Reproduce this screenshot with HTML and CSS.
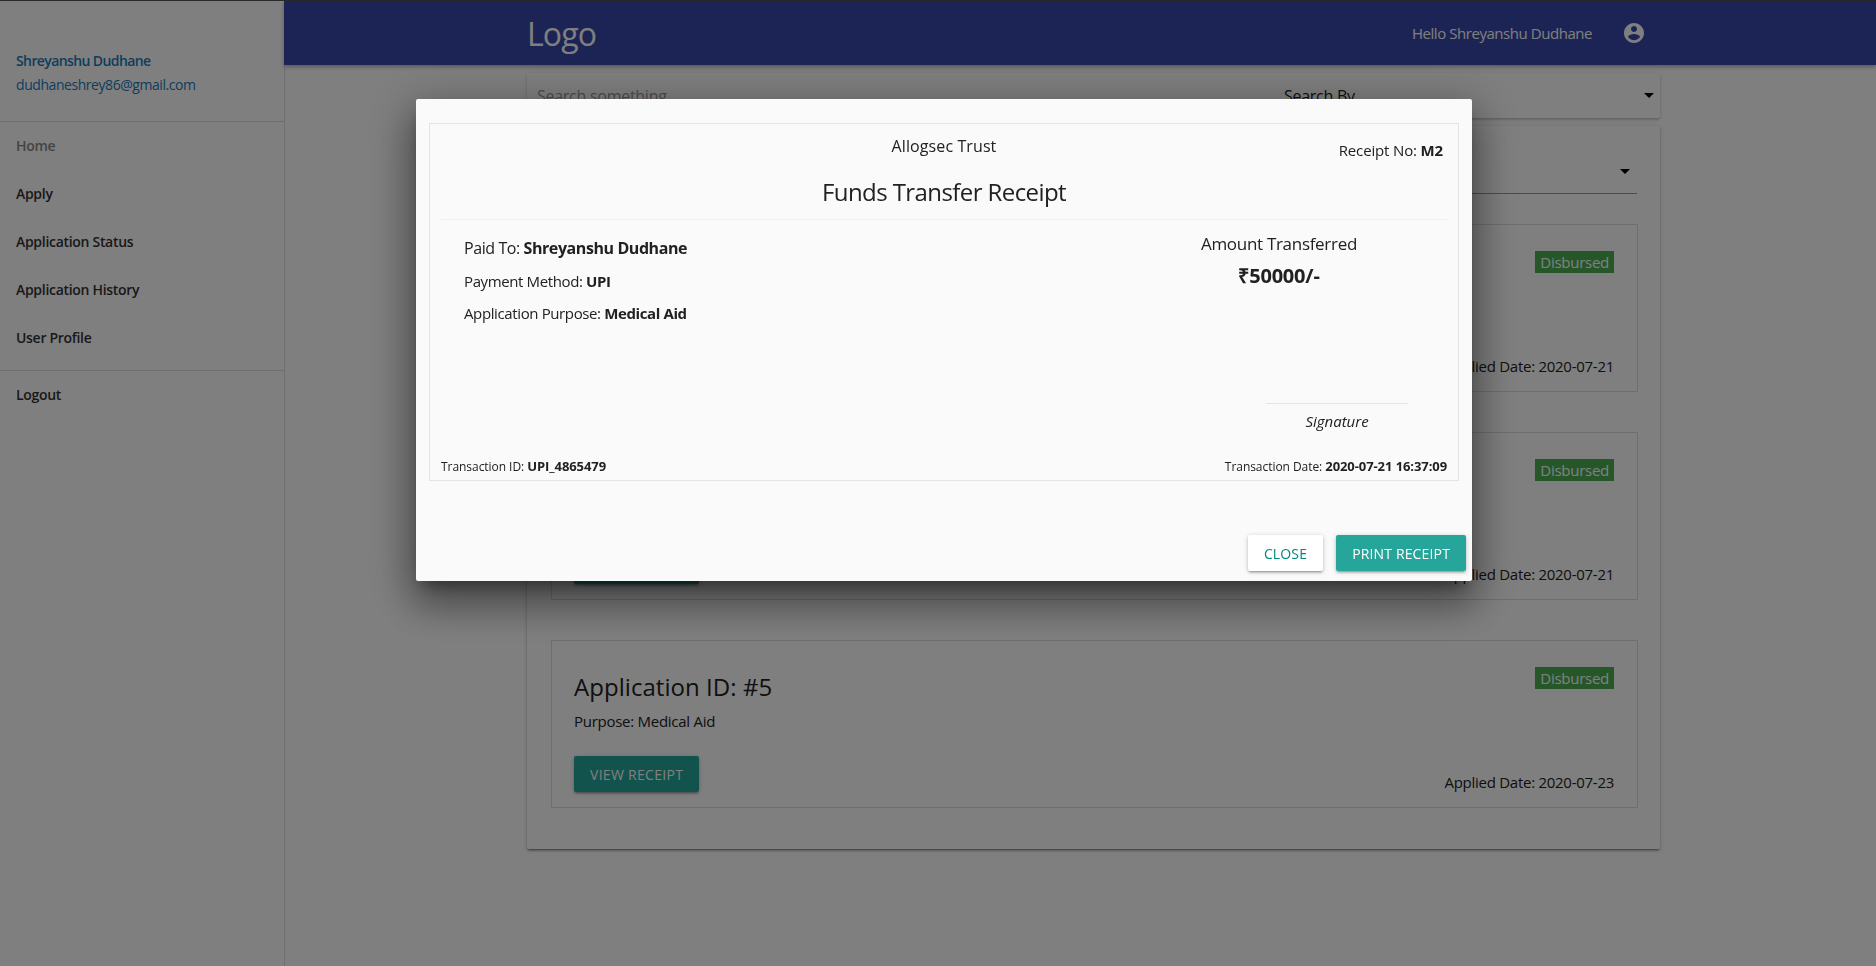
FILE: index.html
```html
<!DOCTYPE html>
<html lang="en">
<head>
  <meta charset="UTF-8">
  <meta name="viewport" content="width=device-width, initial-scale=1.0">
  <title>Application History</title>
  <link rel="stylesheet" href="styles.css">
</head>
<body>
  <div class="app">
    <aside class="sidebar">
      <div class="user-info">
        <div class="user-name">Shreyanshu Dudhane</div>
        <div class="user-email">dudhaneshrey86@gmail.com</div>
      </div>
      <nav class="side-nav">
        <a href="#" class="active">Home</a>
        <a href="#">Apply</a>
        <a href="#">Application Status</a>
        <a href="#">Application History</a>
        <a href="#">User Profile</a>
      </nav>
      <nav class="side-nav logout">
        <a href="#">Logout</a>
      </nav>
    </aside>

    <div class="content">
      <header class="navbar">
        <div class="logo">Logo</div>
        <div class="nav-user">
          <span>Hello Shreyanshu Dudhane</span>
          <svg class="user-icon" viewBox="0 0 24 24"><path d="M12 2C6.48 2 2 6.48 2 12s4.48 10 10 10 10-4.48 10-10S17.52 2 12 2zm0 3c1.66 0 3 1.34 3 3s-1.34 3-3 3-3-1.34-3-3 1.34-3 3-3zm0 14.2c-2.5 0-4.71-1.28-6-3.22.03-1.99 4-3.08 6-3.08 1.99 0 5.97 1.09 6 3.08-1.29 1.94-3.5 3.22-6 3.22z"/></svg>
        </div>
      </header>

      <main class="page">
        <div class="search-card">
          <div class="search-input">Search something</div>
          <div class="search-select">Search By<i class="caret"></i></div>
        </div>

        <section class="list-card">
          <div class="filter-select"><i class="caret"></i></div>

          <article class="app-card">
            <div class="app-main covered"></div>
            <div class="app-side">
              <span class="badge">Disbursed</span>
              <span>Applied Date: 2020-07-21</span>
            </div>
          </article>

          <article class="app-card">
            <div class="app-main covered">
              <div class="btn btn-stub"></div>
            </div>
            <div class="app-side">
              <span class="badge">Disbursed</span>
              <span>Applied Date: 2020-07-21</span>
            </div>
          </article>

          <article class="app-card">
            <div class="app-main">
              <h3>Application ID: #5</h3>
              <p>Purpose: Medical Aid</p>
              <button class="btn">View Receipt</button>
            </div>
            <div class="app-side">
              <span class="badge">Disbursed</span>
              <span>Applied Date: 2020-07-23</span>
            </div>
          </article>
        </section>
      </main>
    </div>
  </div>

  <div class="overlay"></div>

  <div class="modal">
    <div class="receipt">
      <div class="receipt-head">
        <div class="trust">Allogsec Trust</div>
        <div class="receipt-no">Receipt No: <b>M2</b></div>
        <h2>Funds Transfer Receipt</h2>
      </div>
      <div class="receipt-body">
        <div class="paid">
          <div class="paid-to">Paid To: <b>Shreyanshu Dudhane</b></div>
          <div class="paid-line">Payment Method: <b>UPI</b></div>
          <div class="paid-line">Application Purpose: <b>Medical Aid</b></div>
        </div>
        <div class="amount">
          <div class="amount-label">Amount Transferred</div>
          <div class="amount-value">₹50000/-</div>
          <div class="signature">Signature</div>
        </div>
      </div>
      <div class="receipt-foot">
        <span>Transaction ID: <b>UPI_4865479</b></span>
        <span>Transaction Date: <b>2020-07-21 16:37:09</b></span>
      </div>
    </div>
    <div class="modal-foot">
      <button class="btn btn-light">Close</button>
      <button class="btn">Print Receipt</button>
    </div>
  </div>
</body>
</html>
```

FILE: styles.css
```css
* {
  box-sizing: border-box;
}
html, body {
  height: 100%;
}
body {
  margin: 0;
  background: #fff;
  color: #212121;
  font-family: "Open Sans", sans-serif;
  font-size: 15px;
  letter-spacing: -0.27px;
  overflow: hidden;
}
b {
  font-weight: 700;
}
h2, h3, p {
  margin: 0;
  font-weight: 400;
}
.app {
  display: flex;
  height: 100%;
  border-top: 1px solid #555;
}

/* sidebar */
.sidebar {
  width: 285px;
  flex-shrink: 0;
  border-right: 1px solid #ddd;
  font-size: 14px;
  font-weight: 600;
}
.user-info {
  height: 121px;
  padding-top: 48px;
  border-bottom: 1px solid #ddd;
  padding-left: 16px;
  color: #1d7ab8;
}
.user-name {
  line-height: 24px;
  letter-spacing: -0.6px;
}
.user-email {
  font-weight: 400;
  line-height: 24px;
  letter-spacing: -0.44px;
}
.side-nav {
  display: flex;
  flex-direction: column;
  padding-bottom: 8px;
  border-bottom: 1px solid #ddd;
  letter-spacing: -0.3px;
}
.side-nav a {
  height: 48px;
  line-height: 48px;
  padding-left: 16px;
  color: #333;
  text-decoration: none;
}
.side-nav a.active {
  color: #888;
}
.logout {
  border-bottom: 0;
}

/* top bar */
.content {
  flex: 1;
  min-width: 0;
}
.navbar {
  height: 64px;
  margin-left: -1px;
  background: #3949ab;
  color: #fff;
  display: flex;
  align-items: center;
  justify-content: space-between;
  padding: 0 230px 0 243px;
  box-shadow: 0 2px 4px rgba(0, 0, 0, 0.3);
}
.logo {
  font-size: 32px;
  letter-spacing: -0.9px;
}
.nav-user {
  display: flex;
  align-items: center;
  gap: 30px;
  letter-spacing: -0.45px;
}
.user-icon {
  width: 24px;
  height: 24px;
  fill: #fff;
}

/* page */
.page {
  width: 1133px;
  margin-left: 242px;
  padding-top: 8px;
}
.search-card {
  height: 45px;
  display: flex;
  background: #fff;
  border-radius: 2px;
  box-shadow: 0 2px 2px rgba(0, 0, 0, 0.14), 0 1px 5px rgba(0, 0, 0, 0.12);
  font-size: 16px;
  line-height: 46px;
}
.search-input {
  width: 757px;
  padding-left: 10px;
  color: #999;
}
.search-select {
  flex: 1;
  display: flex;
  justify-content: space-between;
  align-items: center;
  padding-right: 6px;
}
.caret {
  width: 0;
  height: 0;
  border-left: 5px solid transparent;
  border-right: 5px solid transparent;
  border-top: 5px solid #000;
}
.list-card {
  margin-top: 8px;
  padding: 0 22px 41px 24px;
  background: #fff;
  border-radius: 2px;
  box-shadow: 0 2px 2px rgba(0, 0, 0, 0.2), 0 1px 5px rgba(0, 0, 0, 0.16), 0 3px 1px -2px rgba(0, 0, 0, 0.2);
}
.filter-select {
  height: 68px;
  margin-right: 1px;
  display: flex;
  justify-content: flex-end;
  align-items: flex-end;
  padding: 0 7px 19px 0;
  border-bottom: 1px solid #999;
}
.app-card {
  height: 168px;
  margin-top: 30px;
  display: flex;
  justify-content: space-between;
  padding: 26px 23px 15px 22px;
  border: 1px solid #ddd;
}
.app-card + .app-card {
  margin-top: 40px;
}
.app-main.covered {
  padding-top: 89px;
}
.app-card h3 {
  font-size: 24px;
  line-height: 40px;
  letter-spacing: 0.05px;
}
.app-card p {
  margin: 4px 0 25px;
  line-height: 20px;
}
.app-side {
  display: flex;
  flex-direction: column;
  justify-content: space-between;
  align-items: flex-end;
  line-height: 20px;
}
.badge {
  height: 22px;
  padding: 0 5px;
  background: #4caf50;
  color: #fff;
  line-height: 22px;
}
.btn {
  height: 36px;
  padding: 0 16px;
  border: 0;
  border-radius: 2px;
  background: #26a69a;
  color: #fff;
  font-family: inherit;
  font-size: 14px;
  letter-spacing: 0.3px;
  text-transform: uppercase;
  box-shadow: 0 2px 2px rgba(0, 0, 0, 0.14), 0 3px 1px -2px rgba(0, 0, 0, 0.12), 0 1px 5px rgba(0, 0, 0, 0.2);
}
.btn-stub {
  width: 125px;
}
.btn-light {
  background: #fff;
  color: #00897b;
}

/* receipt dialog */
.overlay {
  position: fixed;
  inset: 0;
  background: rgba(0, 0, 0, 0.5);
}
.modal {
  position: fixed;
  top: 99px;
  left: 416px;
  width: 1056px;
  height: 482px;
  padding: 24px 13px 0;
  background: #fafafa;
  border-radius: 2px;
  box-shadow: 0 24px 38px 3px rgba(0, 0, 0, 0.28), 0 9px 46px 8px rgba(0, 0, 0, 0.24), 0 11px 15px -7px rgba(0, 0, 0, 0.4);
}
.receipt {
  height: 358px;
  padding: 0 11px;
  border: 1px solid #e4e4e4;
  display: flex;
  flex-direction: column;
}
.receipt-head {
  display: grid;
  grid-template-columns: 1fr auto 1fr;
  padding-top: 10px;
  padding-bottom: 9px;
  border-bottom: 1px solid #eee;
}
.trust {
  grid-column: 2;
  font-size: 16px;
  letter-spacing: 0.1px;
  line-height: 24px;
  text-align: center;
}
.receipt-no {
  grid-column: 3;
  justify-self: end;
  margin-top: 6px;
  padding-right: 4px;
  letter-spacing: -0.15px;
  line-height: 20px;
}
.receipt-head h2 {
  grid-column: 1 / 4;
  margin-top: 14px;
  font-size: 24px;
  letter-spacing: -0.58px;
  line-height: 36px;
  text-align: center;
}
.receipt-body {
  flex: 1;
  display: flex;
  justify-content: space-between;
}
.paid {
  padding: 16px 0 0 23px;
}
.paid-to {
  font-size: 16px;
  letter-spacing: -0.42px;
  line-height: 24px;
}
.paid-line {
  margin-top: 12px;
  letter-spacing: -0.38px;
  line-height: 20px;
}
.paid-to + .paid-line {
  margin-top: 11px;
}
.amount {
  width: 336px;
  padding-top: 12px;
  display: flex;
  flex-direction: column;
  align-items: center;
}
.amount-label {
  font-size: 17px;
  letter-spacing: -0.3px;
  line-height: 24px;
}
.amount-value {
  margin-top: 6px;
  font-size: 20px;
  font-weight: 700;
  letter-spacing: -0.2px;
  line-height: 28px;
}
.signature {
  align-self: flex-end;
  width: 142px;
  margin: auto 39px 26px 0;
  padding-top: 7px;
  border-top: 1px solid #e4e4e4;
  font-style: italic;
  letter-spacing: 0;
  line-height: 20px;
  text-align: center;
}
.receipt-foot {
  display: flex;
  justify-content: space-between;
  padding-bottom: 4px;
  font-size: 12px;
  letter-spacing: -0.05px;
  line-height: 18px;
}
.receipt-foot b {
  font-size: 13px;
  letter-spacing: -0.08px;
}
.modal-foot {
  display: flex;
  justify-content: flex-end;
  gap: 13px;
  margin: 54px -7px 0 0;
}
.modal-foot .btn {
  letter-spacing: 0.15px;
}
```
